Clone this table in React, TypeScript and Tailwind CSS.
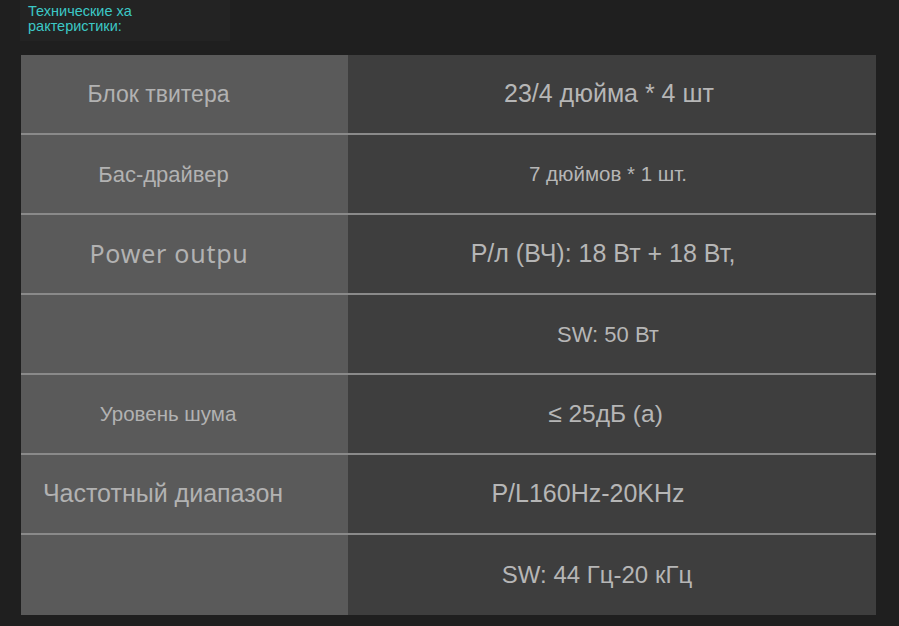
const ROWS: Array<{ label: string; labelCls: string; value: string; valueCls: string }> = [
  { label: 'Блок твитера', labelCls: 'pr-[52px] text-[23px]', value: '23/4 дюйма * 4 шт', valueCls: 'pr-[6px] text-[25px]' },
  { label: 'Бас-драйвер', labelCls: 'pr-[42px] text-[22px]', value: '7 дюймов * 1 шт.', valueCls: 'pr-[8px] text-[20.5px]' },
  { label: 'Power outpu', labelCls: "pr-[31px] text-[25px] tracking-[0.03em] font-['Noto_Sans',sans-serif]", value: 'Р/л (ВЧ): 18 Вт + 18 Вт,', valueCls: 'pr-[18px] text-[25px]' },
  { label: '', labelCls: '', value: 'SW: 50 Вт', valueCls: 'pr-[8px] text-[22px]' },
  { label: 'Уровень шума', labelCls: 'pr-[33px] text-[20.5px]', value: '≤ 25дБ (а)', valueCls: 'pr-[13px] text-[24.5px]' },
  { label: 'Частотный диапазон', labelCls: 'pr-[43px] text-[25px]', value: 'P/L160Hz-20KHz', valueCls: 'pr-[48px] text-[25px]' },
  { label: '', labelCls: '', value: 'SW: 44 Гц-20 кГц', valueCls: 'pr-[30px] text-[24px]' },
];

export default function App() {
  return (
    <div className="h-[626px] w-[899px] overflow-hidden bg-[#1f1f1f] font-['Liberation_Sans',Arial,sans-serif]">
      {/* header caption */}
      <div className="ml-[20px] w-[210px] bg-[#232323] pb-[7px] pl-[8px] pt-[4px] text-[14.5px] leading-[15px] text-[#3cc8c6]">
        Технические ха
        <br />
        рактеристики:
      </div>

      {/* spec table */}
      <div className="ml-[21px] mt-[14px] w-[855px]">
        {ROWS.map((r, i) => (
          <div
            key={i}
            className={
              i < ROWS.length - 1
                ? 'grid h-[80px] grid-cols-[327px_1fr] border-b-2 border-[#8a8a8a]'
                : 'grid h-[80px] grid-cols-[327px_1fr]'
            }
          >
            <div className={`flex items-center justify-center bg-[#5a5a5a] text-[#b2b2b2] ${r.labelCls}`}>
              {r.label}
            </div>
            <div className={`flex items-center justify-center bg-[#3e3e3e] text-[#b6b6b6] ${r.valueCls}`}>
              {r.value}
            </div>
          </div>
        ))}
      </div>
    </div>
  );
}
